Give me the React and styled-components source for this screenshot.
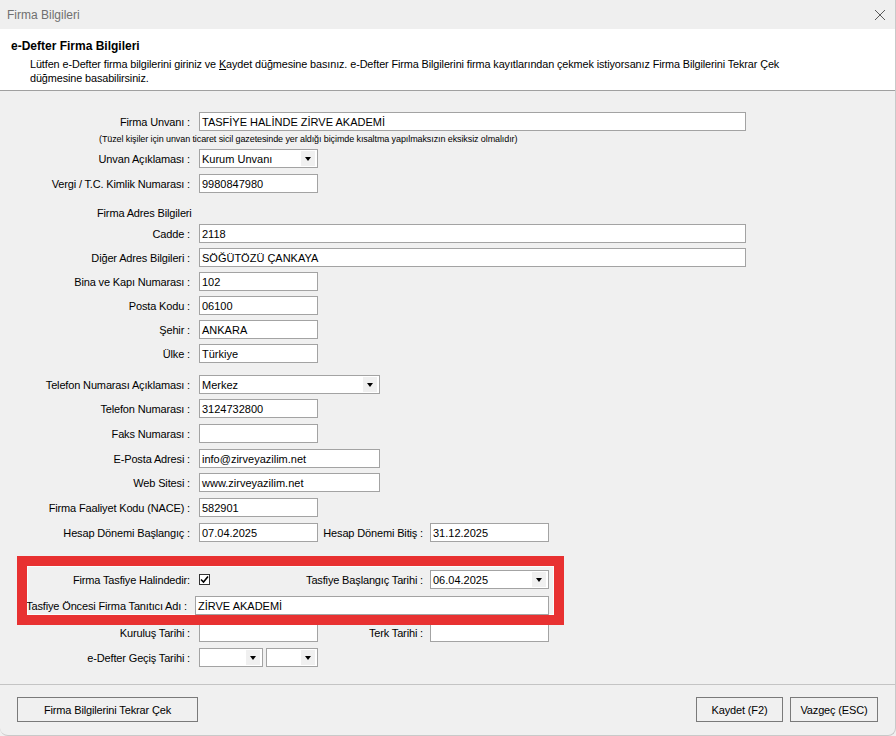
import React from "react";
import styled, { createGlobalStyle } from "styled-components";

const Global = createGlobalStyle`
  html, body {
    margin: 0;
    padding: 0;
    background: #f0f0f0;
  }
  * {
    box-sizing: border-box;
  }
`;

const FONT = `"Liberation Sans", Arial, sans-serif`;

const Window = styled.div`
  width: 896px;
  height: 736px;
  display: flex;
  flex-direction: column;
  background: #f0f0f0;
  font-family: ${FONT};
  font-size: 11px;
  color: #000;
  overflow: hidden;
  border-radius: 0 0 8px 8px;
  border-right: 1px solid #c9c9c9;
  border-bottom: 1px solid #c9c9c9;
`;

const TitleBar = styled.div`
  height: 29px;
  flex-shrink: 0;
  display: flex;
  align-items: center;
  justify-content: space-between;
  padding: 0 9px 0 7px;
  background: #efefef;
`;

const Title = styled.span`
  font-size: 12px;
  color: #707070;
`;

const Header = styled.div`
  height: 62px;
  flex-shrink: 0;
  background: #fff;
  border-bottom: 1px solid #a0a0a0;
  padding: 9px 0 0 11px;
`;

const Heading = styled.div`
  font-size: 12px;
  font-weight: bold;
  line-height: 16px;
`;

const Description = styled.p`
  margin: 3px 0 0;
  padding-left: 19px;
  width: 800px;
  font-size: 10.85px;
  line-height: 14px;
  letter-spacing: -0.1px;
`;

const Body = styled.div`
  flex: 1;
  display: flex;
  flex-direction: column;
  padding-top: 21px;
`;

const Row = styled.div`
  display: flex;
  align-items: center;
  height: 19px;
  flex-shrink: 0;
  margin-top: ${(p) => p.$mt || 0}px;
`;

/* right-aligned caption; long captions spill to the left, like the WinForms labels */
const Label = styled.div`
  width: ${(p) => p.$w || 190}px;
  margin-right: ${(p) => (p.$mr === undefined ? 9 : p.$mr)}px;
  display: flex;
  justify-content: flex-end;
  white-space: nowrap;
  flex-shrink: 0;
  letter-spacing: -0.15px;
`;

const Note = styled.div`
  margin-top: 2px;
  height: 12px;
  padding-left: 99px;
  font-size: 9px;
  line-height: 12px;
  letter-spacing: -0.1px;
  flex-shrink: 0;
`;

const SectionTitle = styled.div`
  margin-top: 14px;
  height: 13px;
  line-height: 13px;
  padding-left: 97px;
  flex-shrink: 0;
  letter-spacing: -0.15px;
`;

const Field = styled.div`
  width: ${(p) => p.$w}px;
  height: 19px;
  flex-shrink: 0;
  background: #fff;
  border: 1px solid #a3a3a3;
  padding-left: 2px;
  display: flex;
  align-items: center;
  white-space: nowrap;
  overflow: hidden;
  margin-right: ${(p) => p.$mr || 0}px;
`;

const Select = styled(Field)`
  justify-content: space-between;
  padding-right: 2px;
`;

const Arrow = styled.div`
  width: 14px;
  height: 15px;
  background: #f0f0f0;
  display: flex;
  align-items: center;
  justify-content: center;

  &::after {
    content: "";
    border-left: 3.5px solid transparent;
    border-right: 3.5px solid transparent;
    border-top: 4px solid #000;
  }
`;

const CheckSlot = styled.div`
  width: 119px;
  flex-shrink: 0;
  display: flex;
  align-items: center;
`;

const CheckBox = styled.div`
  width: 11px;
  height: 11px;
  border: 1px solid #333;
  background: #fff;
  display: flex;
  align-items: center;
  justify-content: center;
`;

const Panel = styled.div`
  margin: 24px 0 0 27px;
  width: 527px;
  height: 49px;
  padding: 4px 5px 0 0;
  flex-shrink: 0;
  display: flex;
  flex-direction: column;
  box-shadow: inset 0 0 0 1px #fbfbfb;
  outline: 10px solid #e83131;
  position: relative;
  z-index: 2;
`;

const Footer = styled.div`
  height: 51px;
  flex-shrink: 0;
  border-top: 1px solid #c4c4c4;
  display: flex;
  align-items: flex-start;
  padding: 12px 17px 0 17px;
  gap: 7px;
`;

const Button = styled.div`
  width: ${(p) => p.$w}px;
  height: 25px;
  border: 1px solid #7a7a7a;
  background: #f0f0f0;
  display: flex;
  align-items: center;
  justify-content: center;
  letter-spacing: -0.15px;
  margin-right: ${(p) => (p.$push ? "auto" : "0")};
`;

const Underline = styled.span`
  text-decoration: underline;
`;

const CloseIcon = () => (
  <svg width="12" height="12" viewBox="0 0 12 12">
    <path d="M1 1 L11 11 M11 1 L1 11" stroke="#5a5a5a" strokeWidth="1" fill="none" />
  </svg>
);

const DropDown = ({ w, value, mr }) => (
  <Select $w={w} $mr={mr}>
    <span>{value}</span>
    <Arrow />
  </Select>
);

export default function App() {
  return (
    <>
      <Global />
      <Window>
        <TitleBar>
          <Title>Firma Bilgileri</Title>
          <CloseIcon />
        </TitleBar>
        <Header>
          <Heading>e-Defter Firma Bilgileri</Heading>
          <Description>
            Lütfen e-Defter firma bilgilerini giriniz ve <Underline>K</Underline>aydet düğmesine
            basınız. e-Defter Firma Bilgilerini firma kayıtlarından çekmek istiyorsanız Firma
            Bilgilerini Tekrar Çek düğmesine basabilirsiniz.
          </Description>
        </Header>
        <Body>
          <Row>
            <Label>Firma Unvanı :</Label>
            <Field $w={547}>TASFİYE HALİNDE ZİRVE AKADEMİ</Field>
          </Row>
          <Note>
            (Tüzel kişiler için unvan ticaret sicil gazetesinde yer aldığı biçimde kısaltma
            yapılmaksızın eksiksiz olmalıdır)
          </Note>
          <Row $mt={4}>
            <Label>Unvan Açıklaması :</Label>
            <DropDown w={119} value="Kurum Unvanı" />
          </Row>
          <Row $mt={6}>
            <Label>Vergi / T.C. Kimlik Numarası :</Label>
            <Field $w={119}>9980847980</Field>
          </Row>

          <SectionTitle>Firma Adres Bilgileri</SectionTitle>
          <Row $mt={4}>
            <Label>Cadde :</Label>
            <Field $w={547}>2118</Field>
          </Row>
          <Row $mt={5}>
            <Label>Diğer Adres Bilgileri :</Label>
            <Field $w={547}>SÖĞÜTÖZÜ ÇANKAYA</Field>
          </Row>
          <Row $mt={5}>
            <Label>Bina ve Kapı Numarası :</Label>
            <Field $w={119}>102</Field>
          </Row>
          <Row $mt={5}>
            <Label>Posta Kodu :</Label>
            <Field $w={119}>06100</Field>
          </Row>
          <Row $mt={5}>
            <Label>Şehir :</Label>
            <Field $w={119}>ANKARA</Field>
          </Row>
          <Row $mt={5}>
            <Label>Ülke :</Label>
            <Field $w={119}>Türkiye</Field>
          </Row>

          <Row $mt={12}>
            <Label>Telefon Numarası Açıklaması :</Label>
            <DropDown w={181} value="Merkez" />
          </Row>
          <Row $mt={5}>
            <Label>Telefon Numarası :</Label>
            <Field $w={119}>3124732800</Field>
          </Row>
          <Row $mt={6}>
            <Label>Faks Numarası :</Label>
            <Field $w={119} />
          </Row>
          <Row $mt={6}>
            <Label>E-Posta Adresi :</Label>
            <Field $w={181}>info@zirveyazilim.net</Field>
          </Row>
          <Row $mt={5}>
            <Label>Web Sitesi :</Label>
            <Field $w={181}>www.zirveyazilim.net</Field>
          </Row>
          <Row $mt={6}>
            <Label>Firma Faaliyet Kodu (NACE) :</Label>
            <Field $w={119}>582901</Field>
          </Row>
          <Row $mt={6}>
            <Label>Hesap Dönemi Başlangıç :</Label>
            <Field $w={119}>07.04.2025</Field>
            <Label $w={105} $mr={7}>Hesap Dönemi Bitiş :</Label>
            <Field $w={119}>31.12.2025</Field>
          </Row>

          <Panel>
            <Row>
              <Label $w={163}>Firma Tasfiye Halindedir:</Label>
              <CheckSlot>
                <CheckBox>
                  <svg width="9" height="9" viewBox="0 0 9 9">
                    <path d="M1 4.5 L3.5 7 L8 1.5" stroke="#000" strokeWidth="1.6" fill="none" />
                  </svg>
                </CheckBox>
              </CheckSlot>
              <Label $w={105} $mr={7}>Tasfiye Başlangıç Tarihi :</Label>
              <DropDown w={119} value="06.04.2025" />
            </Row>
            <Row $mt={7}>
              <Label $w={160} $mr={8}>Tasfiye Öncesi Firma Tanıtıcı Adı :</Label>
              <Field $w={354}>ZİRVE AKADEMİ</Field>
            </Row>
          </Panel>

          <Row $mt={8}>
            <Label>Kuruluş Tarihi :</Label>
            <Field $w={119} />
            <Label $w={105} $mr={7}>Terk Tarihi :</Label>
            <Field $w={119} />
          </Row>
          <Row $mt={6}>
            <Label>e-Defter Geçiş Tarihi :</Label>
            <DropDown w={64} value="" mr={3} />
            <DropDown w={52} value="" />
          </Row>
        </Body>
        <Footer>
          <Button $w={181} $push>Firma Bilgilerini Tekrar Çek</Button>
          <Button $w={87}>Kaydet (F2)</Button>
          <Button $w={88}>Vazgeç (ESC)</Button>
        </Footer>
      </Window>
    </>
  );
}
